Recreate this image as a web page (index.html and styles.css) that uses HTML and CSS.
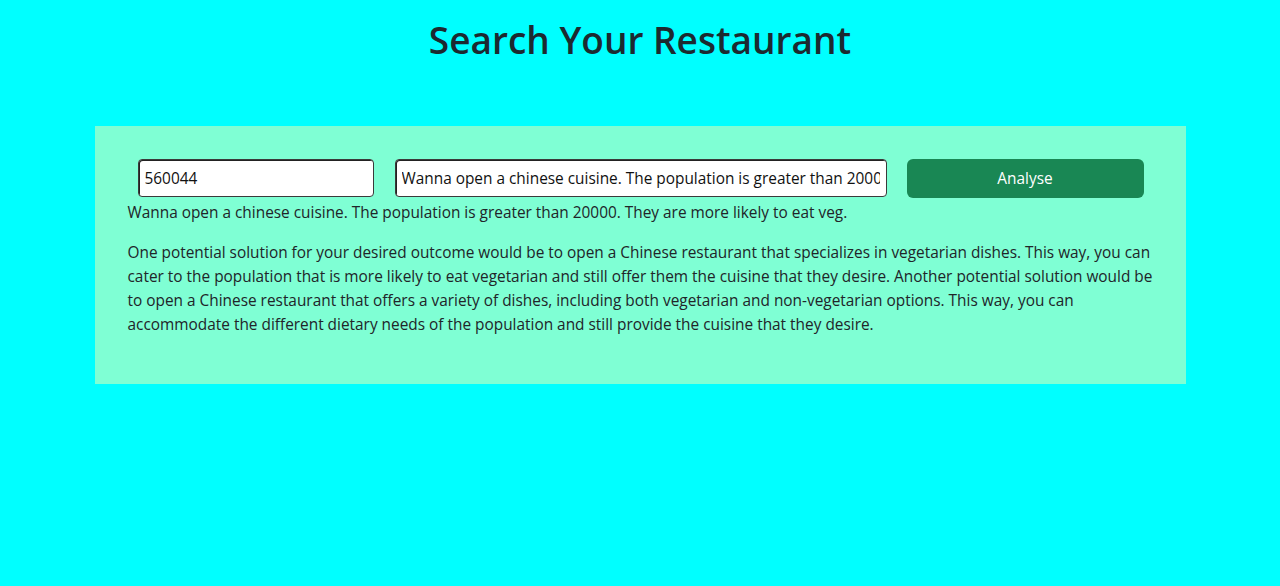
FILE: index.html
```html
<!DOCTYPE html>
<html lang="en">
<head>
<meta charset="utf-8">
<title>Search Your Restaurant</title>
<link rel="stylesheet" href="styles.css">
</head>
<body>
<h1 class="title">Search Your Restaurant</h1>
<section class="card">
  <form class="search-row">
    <input class="field field-pin" type="text" value="560044">
    <input class="field field-query" type="text" value="Wanna open a chinese cuisine. The population is greater than 20000. They are more likely to eat veg.">
    <button class="btn-analyse" type="button">Analyse</button>
  </form>
  <div class="query-echo">Wanna open a chinese cuisine. The population is greater than 20000. They are more likely to eat veg.</div>
  <p class="answer">One potential solution for your desired outcome would be to open a Chinese restaurant that specializes in vegetarian dishes. This way, you can cater to the population that is more likely to eat vegetarian and still offer them the cuisine that they desire. Another potential solution would be to open a Chinese restaurant that offers a variety of dishes, including both vegetarian and non-vegetarian options. This way, you can accommodate the different dietary needs of the population and still provide the cuisine that they desire.</p>
</section>
</body>
</html>
```

FILE: styles.css
```css
* { box-sizing: border-box; }

body {
  margin: 0;
  background: #00ffff;
  font-family: "Open Sans", "Noto Sans", sans-serif;
  font-size: 15.4px;
  line-height: 24px;
  color: #212529;
}

.title {
  margin: 0;
  padding-top: 16px;
  font-size: 37px;
  line-height: 48px;
  font-weight: 600;
  text-align: center;
  color: #1c2a30;
}

.card {
  width: 1091px;
  margin: 62px auto 0;
  padding: 33px 33px 47px;
  background: #7fffd4;
}

.search-row {
  display: flex;
  align-items: flex-start;
  padding-left: 10px;
}

.field {
  height: 38px;
  padding: 0 6px;
  font-family: inherit;
  font-size: 15.4px;
  color: #111;
  background: #fff;
  border: 1px solid #3a3a3a;
  border-radius: 4px;
  box-shadow: inset 1px 1px 0 #222;
}

.field-pin { width: 236px; }

.field-query {
  width: 492px;
  margin-left: 21px;
}

.btn-analyse {
  width: 237px;
  height: 39px;
  margin-left: 20px;
  border: none;
  border-radius: 6px;
  background: #198754;
  color: #fff;
  font-family: inherit;
  font-size: 15.4px;
}

.query-echo {
  margin-top: 3px;
}

.answer {
  margin: 16px 0 0;
}
```
